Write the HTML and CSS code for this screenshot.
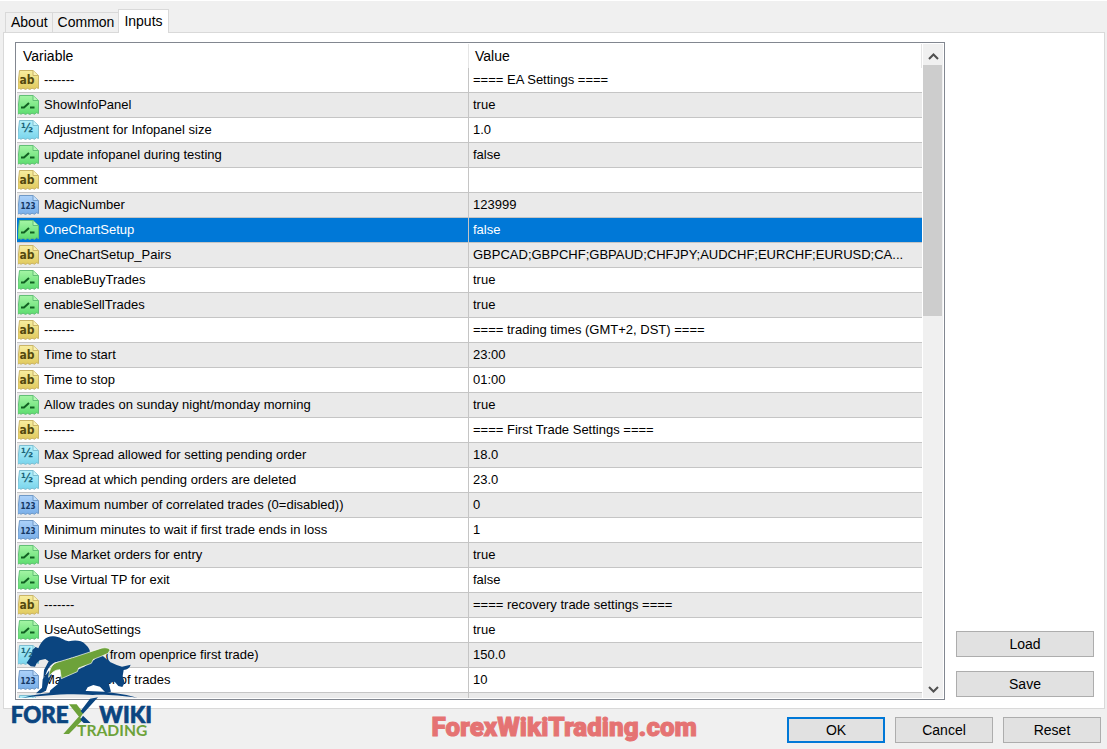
FILE: index.html
```
<!DOCTYPE html>
<html lang="en">
  <head>
    <meta charset="utf-8">
    <title>Expert Properties</title>
    <link rel="stylesheet" href="styles.css">
  </head>
  <body>
    <!-- row type icons -->
    <svg class="sprite" width="0" height="0" aria-hidden="true">
      <defs>
        <linearGradient id="gold" x2="0" y2="1"><stop offset="0" stop-color="#f8eea0"/><stop offset="1" stop-color="#e0c95c"/></linearGradient>
        <linearGradient id="green" x2="0" y2="1"><stop offset="0" stop-color="#a4f5a4"/><stop offset="1" stop-color="#5cdc6e"/></linearGradient>
        <linearGradient id="cyan" x2="0" y2="1"><stop offset="0" stop-color="#b4f0fa"/><stop offset="1" stop-color="#78d4ec"/></linearGradient>
        <linearGradient id="blue" x2="0" y2="1"><stop offset="0" stop-color="#acd2fa"/><stop offset="1" stop-color="#78aee8"/></linearGradient>
        <path id="ticket" d="M1.500 .5H15l5.500 5V18.500l-2-.8-2 1.500-2.500-1-2 1.200-2.500-1-2 1-2.500-1.200-2 1-1.500-.7-2 .5z"/>
        <path id="fold" d="M15 .8V5.500h5.300"/>
      </defs>
      <symbol id="i-str" viewBox="0 0 21 20"><use href="#ticket" fill="url(#gold)" stroke="#c9b468"/><use href="#fold" fill="#fbf3b8" stroke="#c9b468"/></symbol>
      <symbol id="i-bool" viewBox="0 0 21 20">
        <use href="#ticket" fill="url(#green)" stroke="#62bf76"/><use href="#fold" fill="#baf8b8" stroke="#62bf76"/>
        <path d="M3 12.500h3l5-4.500M12 12.500h4.500" fill="none" stroke="#116022" stroke-width="2"/>
      </symbol>
      <symbol id="i-dbl" viewBox="0 0 21 20"><use href="#ticket" fill="url(#cyan)" stroke="#7dbdd0"/><use href="#fold" fill="#c8f4fb" stroke="#7dbdd0"/></symbol>
      <symbol id="i-int" viewBox="0 0 21 20"><use href="#ticket" fill="url(#blue)" stroke="#7099c6"/><use href="#fold" fill="#c3dffb" stroke="#7099c6"/></symbol>
    </svg>

    <div class="tabs">
      <button class="tab">About</button>
      <button class="tab">Common</button>
      <button class="tab active">Inputs</button>
    </div>

    <div class="panel">
      <div class="list">
        <div class="rows">
          <table>
            <colgroup><col class="name-col"><col></colgroup>
            <thead>
              <tr><th>Variable</th><th>Value</th></tr>
            </thead>
            <tbody>
              <tr><td><svg><use href="#i-str"/><text x="9" y="14" class="str">ab</text></svg>-------</td><td>==== EA Settings ====</td></tr>
              <tr><td><svg><use href="#i-bool"/></svg>ShowInfoPanel</td><td>true</td></tr>
              <tr><td><svg><use href="#i-dbl"/><text x="9" y="12" class="dbl">½</text></svg>Adjustment for Infopanel size</td><td>1.0</td></tr>
              <tr><td><svg><use href="#i-bool"/></svg>update infopanel during testing</td><td>false</td></tr>
              <tr><td><svg><use href="#i-str"/><text x="9" y="14" class="str">ab</text></svg>comment</td><td></td></tr>
              <tr><td><svg><use href="#i-int"/><text x="10" y="14" class="int">123</text></svg>MagicNumber</td><td>123999</td></tr>
              <tr class="selected"><td><svg><use href="#i-bool"/></svg>OneChartSetup</td><td>false</td></tr>
              <tr><td><svg><use href="#i-str"/><text x="9" y="14" class="str">ab</text></svg>OneChartSetup_Pairs</td><td>GBPCAD;GBPCHF;GBPAUD;CHFJPY;AUDCHF;EURCHF;EURUSD;CA...</td></tr>
              <tr><td><svg><use href="#i-bool"/></svg>enableBuyTrades</td><td>true</td></tr>
              <tr><td><svg><use href="#i-bool"/></svg>enableSellTrades</td><td>true</td></tr>
              <tr><td><svg><use href="#i-str"/><text x="9" y="14" class="str">ab</text></svg>-------</td><td>==== trading times (GMT+2, DST) ====</td></tr>
              <tr><td><svg><use href="#i-str"/><text x="9" y="14" class="str">ab</text></svg>Time to start</td><td>23:00</td></tr>
              <tr><td><svg><use href="#i-str"/><text x="9" y="14" class="str">ab</text></svg>Time to stop</td><td>01:00</td></tr>
              <tr><td><svg><use href="#i-bool"/></svg>Allow trades on sunday night/monday morning</td><td>true</td></tr>
              <tr><td><svg><use href="#i-str"/><text x="9" y="14" class="str">ab</text></svg>-------</td><td>==== First Trade Settings ====</td></tr>
              <tr><td><svg><use href="#i-dbl"/><text x="9" y="12" class="dbl">½</text></svg>Max Spread allowed for setting pending order</td><td>18.0</td></tr>
              <tr><td><svg><use href="#i-dbl"/><text x="9" y="12" class="dbl">½</text></svg>Spread at which pending orders are deleted</td><td>23.0</td></tr>
              <tr><td><svg><use href="#i-int"/><text x="10" y="14" class="int">123</text></svg>Maximum number of correlated trades (0=disabled))</td><td>0</td></tr>
              <tr><td><svg><use href="#i-int"/><text x="10" y="14" class="int">123</text></svg>Minimum minutes to wait if first trade ends in loss</td><td>1</td></tr>
              <tr><td><svg><use href="#i-bool"/></svg>Use Market orders for entry</td><td>true</td></tr>
              <tr><td><svg><use href="#i-bool"/></svg>Use Virtual TP for exit</td><td>false</td></tr>
              <tr><td><svg><use href="#i-str"/><text x="9" y="14" class="str">ab</text></svg>-------</td><td>==== recovery trade settings ====</td></tr>
              <tr><td><svg><use href="#i-bool"/></svg>UseAutoSettings</td><td>true</td></tr>
              <tr><td><svg><use href="#i-dbl"/><text x="9" y="12" class="dbl">½</text></svg>StopLoss&nbsp; (from openprice first trade)</td><td>150.0</td></tr>
              <tr><td><svg><use href="#i-int"/><text x="10" y="14" class="int">123</text></svg>Max number of trades</td><td>10</td></tr>
              <tr><td><svg><use href="#i-dbl"/></svg></td><td></td></tr>
            </tbody>
          </table>
        </div>
        <div class="scrollbar">
          <button class="arrow" aria-label="Scroll up"><svg viewBox="0 0 11 7"><path d="M1 6l4.500-4.500L10 6"/></svg></button>
          <div class="track"><div class="thumb"></div></div>
          <button class="arrow" aria-label="Scroll down"><svg viewBox="0 0 11 7"><path d="M1 1l4.500 4.500L10 1"/></svg></button>
        </div>
      </div>
      <div class="side">
        <button class="btn">Load</button>
        <button class="btn">Save</button>
      </div>
    </div>

    <div class="footer">
      <span class="site">ForexWikiTrading.com</span>
      <button class="btn primary">OK</button>
      <button class="btn">Cancel</button>
      <button class="btn">Reset</button>
    </div>

    <svg class="logo" viewBox="0 0 480 357" role="img" aria-label="Forex Wiki Trading">
      <!-- bear -->
      <path fill="#0b4580" d="M80 98L96 74 97 60 107 51 115 55C124 34 137 20 157 19C176 17 190 31 206 34C226 30 244 31 255 42C265 51 272 61 270 73L218 82 192 92 165 97C150 104 143 118 138 131L130 148 132 120 146 94 136 87 119 91 110 100 105 110 92 109Z"/>
      <!-- bull -->
      <path fill="#0b4580" d="M180 140L250 112 304 74 330 96 350 105 366 110 392 104C389 114 382 119 371 120L368 138 374 158 367 171 355 168 344 155 326 160 333 185 317 188 300 170 280 165 263 172 253 190 148 190 151 181 173 163Z"/>
      <path fill="#0b4580" d="M128 148L147 122 156 136 145 160 138 182 122 190 108 190 126 173Z"/>
      <path fill="#6da23a" stroke="#fff" stroke-width="2" d="M146 142C148 115 157 99 178 95L224 81 300 56C312 52 325 52 330 60L324 70 306 78 280 88 274 100 236 114 232 125 184 146 180 119C165 119 154 128 146 142Z"/>
      <path fill="#0b4580" d="M65 204C132 187 213 181 278 184C326 185 370 192 412 203C360 197 320 193 278 195C210 189 127 196 65 204Z"/>
      <text x="32" y="279" class="word" font-size="67">FORE</text>
      <text x="298" y="279" class="word" font-size="67">WIKI</text>
      <text x="231" y="317" class="word trading" font-size="47">TRADING</text>
      <path fill="#6da23a" d="M207 223H230L250 249 240 264ZM236 260L250 268 207 312H190Z"/>
      <path fill="#0b4580" d="M270 206L294 202 249 251 242 243ZM249 257L272 279H251L241 269Z"/>
    </svg>
  </body>
</html>
```
FILE: styles.css
```
* {
  box-sizing: border-box;
}

body {
  position: relative;
  display: flex;
  flex-direction: column;
  height: 100vh;
  margin: 0;
  overflow: hidden;
  background-color: #f0f0f0;
  border-top: 1px solid #fff;
  font-family: "Liberation Sans", Arial, sans-serif;
  font-size: 13px;
  color: #000;
}

button {
  font-family: inherit;
  font-size: 14px;
  color: #000;
}

.sprite {
  position: absolute;
}

/* tabs */
.tabs {
  display: flex;
  align-items: flex-end;
  height: 32px;
  padding-left: 5px;
}

.tab {
  height: 21px;
  padding: 0 4px 2px 5px;
  background-color: #f0f0f0;
  border: 1px solid #d9d9d9;
  border-right: none;
}

.tab.active {
  z-index: 1;
  height: 24px;
  padding: 0 5px 2px;
  background-color: #fff;
  border-right: 1px solid #d9d9d9;
  border-bottom: none;
}

.panel {
  flex: 1;
  display: flex;
  gap: 11px;
  min-height: 0;
  margin: -1px 2px 0 3px;
  padding: 9px 10px 8px 11px;
  background-color: #fff;
  border: 1px solid #d9d9d9;
}

/* inputs list */
.list {
  flex: 1;
  display: flex;
  min-width: 0;
  padding: 1px;
  border: 1px solid #828790;
}

.rows {
  flex: 1;
  min-width: 0;
  overflow: hidden;
}

table {
  width: 100%;
  table-layout: fixed;
  border-collapse: separate;
  border-spacing: 0;
}

.name-col {
  width: 452px;
}

th {
  height: 24px;
  padding: 0 6px;
  font-size: 14px;
  font-weight: normal;
  text-align: left;
  border-right: 1px solid #e5e5e5;
}

td {
  height: 25px;
  padding: 0 4px;
  line-height: 24px;
  white-space: nowrap;
  overflow: hidden;
  border-bottom: 1px solid #c5c5c5;
}

td:first-child {
  padding-left: 1px;
  border-right: 1px solid #c5c5c5;
}

tbody tr:nth-child(even) {
  background-color: #eaeaea;
}

tbody tr.selected {
  background-color: #0078d7;
  color: #fff;
}

td svg {
  width: 21px;
  height: 20px;
  margin: 2px 5px 0 0;
  vertical-align: top;
}

td text {
  font-family: "DejaVu Sans Condensed", "DejaVu Sans", sans-serif;
  font-weight: bold;
  text-anchor: middle;
}

.str {
  font-size: 12px;
  fill: #54490f;
}

.dbl {
  font-size: 13px;
  fill: #1b6378;
}

.int {
  font-size: 8px;
  fill: #143763;
}

.scrollbar {
  display: flex;
  flex-direction: column;
  width: 20px;
  margin-left: 1px;
  background-color: #f0f0f0;
}

.arrow {
  height: 21px;
  padding: 0;
  background: none;
  border: none;
}

.arrow svg {
  width: 11px;
  height: 7px;
}

.arrow path {
  fill: none;
  stroke: #505050;
  stroke-width: 2;
}

.track {
  flex: 1;
}

.thumb {
  width: 19px;
  height: 41%;
  background-color: #cdcdcd;
}

/* buttons */
.side {
  display: flex;
  flex-direction: column;
  justify-content: flex-end;
  gap: 14px;
  width: 138px;
  padding-bottom: 3px;
}

.btn {
  height: 26px;
  background-color: #e1e1e1;
  border: 1px solid #adadad;
}

.footer {
  display: flex;
  justify-content: flex-end;
  gap: 10px;
  height: 40px;
  padding: 8px 6px 0 0;
}

.footer .btn {
  width: 98px;
}

.footer .primary {
  border: 2px solid #0078d7;
}

.site {
  margin-right: 80px;
  font-family: Roboto, sans-serif;
  font-size: 26px;
  font-weight: 900;
  line-height: 20px;
  color: #e57373;
  -webkit-text-stroke: 1px #e57373;
}

/* logo laid over the corner of the dialog */
.logo {
  position: absolute;
  left: 0;
  bottom: 0;
  width: 160px;
  height: 119px;
  pointer-events: none;
}

.word {
  font-family: Lato, sans-serif;
  font-weight: 900;
  fill: #0b4580;
  stroke: #0b4580;
  stroke-width: 2;
}

.trading {
  font-weight: bold;
  fill: #6da23a;
  stroke: none;
}
```
